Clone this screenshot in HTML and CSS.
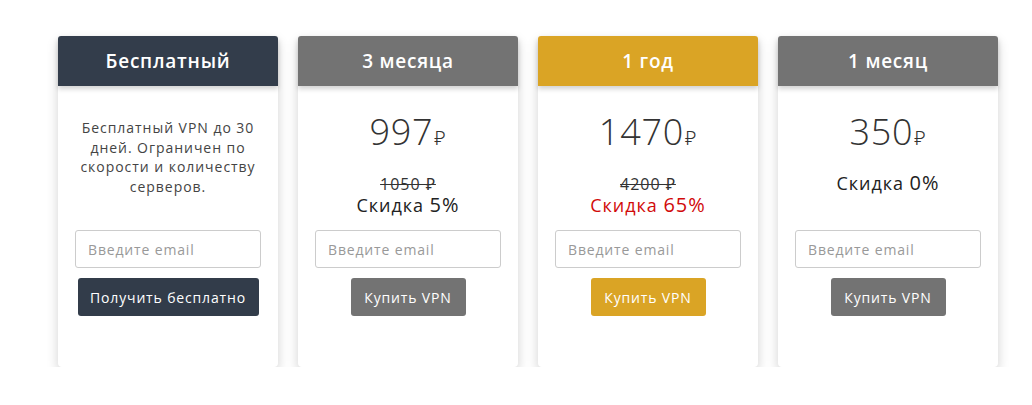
FILE: index.html
```html
<!DOCTYPE html>
<html lang="ru">
<head>
<meta charset="UTF-8">
<meta name="viewport" content="width=device-width, initial-scale=1.0">
<title>Тарифы VPN</title>
<link rel="stylesheet" href="styles.css">
</head>
<body>
<div class="plans">
  <div class="plan">
    <div class="plan-head head-dark">Бесплатный</div>
    <div class="plan-body">
      <div class="plan-info">
        <p class="plan-desc">Бесплатный VPN до 30 дней. Ограничен по скорости и количеству серверов.</p>
      </div>
      <input class="email" type="text" placeholder="Введите email">
      <button class="btn btn-dark btn-wide">Получить бесплатно</button>
    </div>
  </div>

  <div class="plan">
    <div class="plan-head head-gray">3 месяца</div>
    <div class="plan-body">
      <div class="plan-info">
        <div class="price">997<span class="rub">₽</span></div>
        <div class="old-price">1050 ₽</div>
        <div class="discount">Скидка <span class="pct">5%</span></div>
      </div>
      <input class="email" type="text" placeholder="Введите email">
      <button class="btn btn-gray">Купить VPN</button>
    </div>
  </div>

  <div class="plan">
    <div class="plan-head head-gold">1 год</div>
    <div class="plan-body">
      <div class="plan-info">
        <div class="price">1470<span class="rub">₽</span></div>
        <div class="old-price">4200 ₽</div>
        <div class="discount discount-hot">Скидка <span class="pct">65%</span></div>
      </div>
      <input class="email" type="text" placeholder="Введите email">
      <button class="btn btn-gold">Купить VPN</button>
    </div>
  </div>

  <div class="plan">
    <div class="plan-head head-gray">1 месяц</div>
    <div class="plan-body">
      <div class="plan-info">
        <div class="price">350<span class="rub">₽</span></div>
        <div class="discount discount-first">Скидка <span class="pct">0%</span></div>
      </div>
      <input class="email" type="text" placeholder="Введите email">
      <button class="btn btn-gray">Купить VPN</button>
    </div>
  </div>
</div>
</body>
</html>
```

FILE: styles.css
```css
body { margin: 0; background: #fff; font-family: "Open Sans", "Noto Sans", sans-serif; color: #333; letter-spacing: 0.06em; }
.plans { display: flex; gap: 20px; padding: 36px 0 0 58px; }
.plan { width: 220px; height: 331px; background: #fff; border-radius: 4px; box-shadow: 0 5px 12px rgba(0, 0, 0, 0.18); display: flex; flex-direction: column; }
.plan-head { height: 50px; display: flex; align-items: center; justify-content: center; color: #fff; font-size: 19px; font-weight: 600; letter-spacing: 0.04em; border-radius: 3px 3px 0 0; box-shadow: 0 3px 5px rgba(0, 0, 0, 0.18); position: relative; }
.head-dark { background: #333d4b; }
.head-gray { background: #737373; }
.head-gold { background: #daa425; }

.plan-body { padding: 24px 17px 0; display: flex; flex-direction: column; align-items: center; }
.plan-info { height: 110px; width: 100%; margin-bottom: 10px; text-align: center; }
.plan-desc { margin: 0; padding: 8px 0 0; font-size: 14px; line-height: 19.6px; color: #444; }

.price { font-size: 36px; font-weight: 300; line-height: 43px; color: #333; letter-spacing: 0.02em; }
.rub { font-size: 20px; margin-left: 1px; }
.old-price { margin-top: 15px; font-size: 16px; line-height: 20px; text-decoration: line-through; color: #333; }
.discount { font-size: 18px; line-height: 22px; color: #222; }
.discount-first { margin-top: 13px; }
.discount .pct { font-size: 20px; }
.discount-hot { color: #d10a0a; }

.email { box-sizing: border-box; width: 186px; height: 38px; border: 1px solid #ccc; border-radius: 3px; padding: 0 12px; font: inherit; font-size: 14px; letter-spacing: 0.06em; color: #333; }
.email::placeholder { color: #999; }

.btn { margin-top: 10px; height: 38px; padding: 0; border: none; border-radius: 3px; color: #fff; font: inherit; font-size: 14px; letter-spacing: 0.06em; cursor: pointer; }
.btn-wide { width: 181px; }
.btn-dark { background: #323c4a; }
.btn-gray { background: #737373; width: 115px; }
.btn-gold { background: #daa425; width: 115px; }
```
